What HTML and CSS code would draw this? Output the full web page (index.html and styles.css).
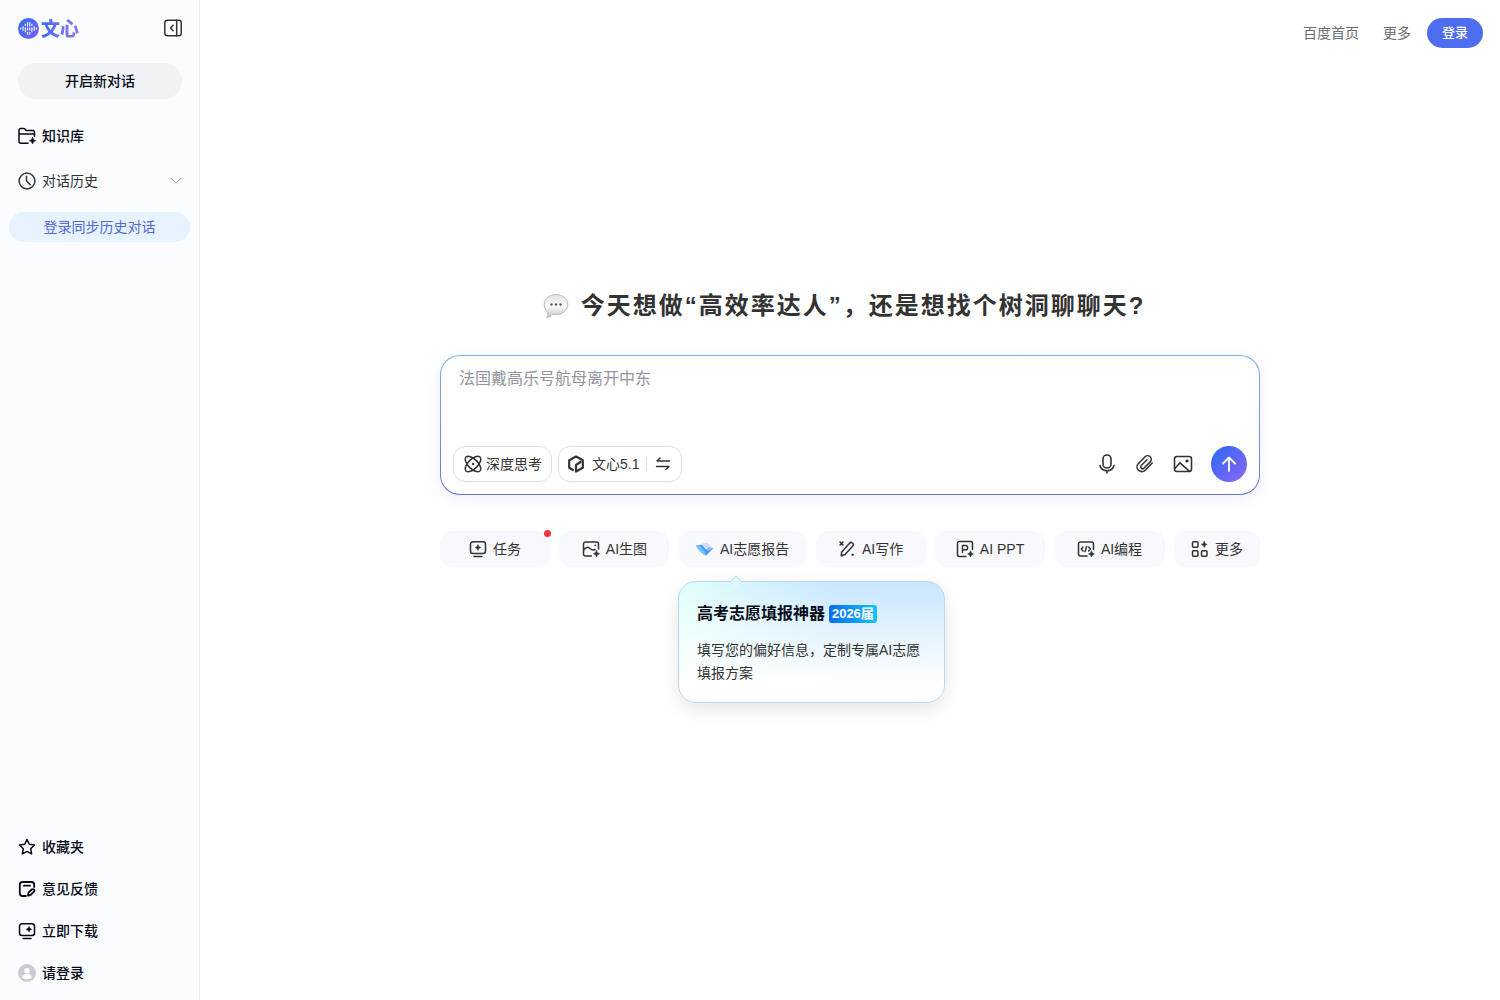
FILE: index.html
```
<!DOCTYPE html>
<html lang="zh-CN">
<head>
  <meta charset="UTF-8">
  <title>文心</title>
  <meta name="viewport" content="width=device-width, initial-scale=1">
  <link rel="stylesheet" href="styles.css">
</head>
<body>
  <aside class="sidebar">
    <div class="sidebar-top">
      <a href="#" class="logo">
        <svg width="21" height="21" viewBox="0 0 21 21">
          <defs>
            <linearGradient id="logoFill" x1="0" y1="0" x2="1" y2="1">
              <stop offset="0" stop-color="#2f6df2"/>
              <stop offset="1" stop-color="#8060f0"/>
            </linearGradient>
          </defs>
          <circle cx="10.500" cy="10.500" r="10.500" fill="url(#logoFill)"/>
          <path d="M2.700 10v1M5 8.700v3.600M7.300 6v1.500M7.300 9.700v4M9.500 4.500v3.500M9.500 10v2M9.500 14.200v2M11.700 4.500v3.500M11.700 10v2M11.700 14.200v2M13.900 6v1.500M13.900 9.700v4M16.200 8.700v3.600M18.400 10v1" stroke="#fff" stroke-width="1.100" stroke-linecap="round"/>
        </svg>
        <span>文心</span>
      </a>
      <button class="icon-btn" aria-label="收起侧边栏">
        <svg class="icon" viewBox="0 0 18 18"><rect x="0.800" y="1.300" width="16.400" height="15.400" rx="2.500"/><path d="M12.700 1.300v15.400M9 6.300 6.500 9 9 11.700"/></svg>
      </button>
    </div>

    <button class="new-chat">开启新对话</button>

    <nav class="menu">
      <a href="#" class="menu-item">
        <svg class="icon" viewBox="0 0 18 18"><path d="M10 16.300H3a2 2 0 0 1-2-2V3a1.500 1.500 0 0 1 1.500-1.500h3.300c.5 0 .8.200 1.100.500l1.300 1.600h7.300A1.800 1.800 0 0 1 16.500 5.400V9.500M1 7h15.500"/><path class="solid" d="M14.500 10.500q.6 2.700 3.200 3.200-2.600.6-3.200 3.300-.6-2.700-3.200-3.300 2.600-.5 3.200-3.200z"/></svg>
        知识库
      </a>
      <a href="#" class="menu-item regular">
        <svg class="icon" viewBox="0 0 18 18"><circle cx="9" cy="9" r="7.900"/><path d="M8.500 4.200V9l3.600 3.600"/></svg>
        对话历史
        <svg class="arrow" width="12" height="8" viewBox="0 0 12 8"><path d="M.8 1 6 6.300 11.200 1"/></svg>
      </a>
    </nav>
    <button class="sync-btn">登录同步历史对话</button>

    <nav class="menu bottom">
      <a href="#" class="menu-item">
        <svg class="icon" viewBox="0 0 18 18"><path d="m9 1.500 2.300 4.800 5.200.7-3.800 3.700.9 5.200L9 13.400l-4.600 2.500.9-5.200L1.500 7l5.200-.7z"/></svg>
        收藏夹
      </a>
      <a href="#" class="menu-item">
        <svg class="icon bold" viewBox="0 0 18 18"><path d="M8 16H4.500A2.700 2.700 0 0 1 1.800 13.300V4.700A2.700 2.700 0 0 1 4.500 2h9a2.700 2.700 0 0 1 2.700 2.700V7M6 5.700h6M10 15.500l.5-2.800 3.200-3.200a1.400 1.400 0 0 1 2.200 2.200l-3.200 3.200z"/></svg>
        意见反馈
      </a>
      <a href="#" class="menu-item">
        <svg class="icon" viewBox="0 0 18 18"><rect x="1.500" y="1.800" width="15" height="11.700" rx="2.500"/><path d="M5 16.500h8"/><path class="solid" d="M11 4.500q.4 2.300 2.700 2.800-2.300.5-2.700 2.800-.5-2.300-2.800-2.800 2.300-.5 2.800-2.800z"/></svg>
        立即下载
      </a>
      <a href="#" class="menu-item">
        <svg width="18" height="18" viewBox="0 0 18 18"><circle cx="9" cy="9" r="9" fill="#c9cad2"/><circle cx="9" cy="6.800" r="2.700" fill="#fff"/><path d="M4 13.800c.4-3 2.400-4 5-4s4.600 1 5 4c-2.600 1.800-7.400 1.800-10 0z" fill="#fff"/></svg>
        请登录
      </a>
    </nav>
  </aside>

  <main>
    <header class="topbar">
      <a href="#">百度首页</a>
      <a href="#">更多</a>
      <button class="login">登录</button>
    </header>

    <section class="content">
      <h1>
        <svg width="26" height="26" viewBox="0 0 26 26">
          <defs>
            <linearGradient id="bubble" x1="0" y1="0" x2="0" y2="1">
              <stop offset="0" stop-color="#e2e2e2"/>
              <stop offset="0.500" stop-color="#fafafa"/>
              <stop offset="1" stop-color="#c6c6c6"/>
            </linearGradient>
          </defs>
          <path d="M13 1.500c6.600 0 11.800 4.300 11.800 10S19.600 21.500 13 21.500c-1.200 0-2.200-.1-3.200-.4-1.600 1.900-3.800 3.300-6.200 3.400 1.100-1.300 1.600-3 1.300-5C2.600 17.600 1.200 14.800 1.200 11.500c0-5.700 5.200-10 11.800-10z" fill="url(#bubble)" stroke="#aaa" stroke-width="0.800"/>
          <circle cx="8.500" cy="11.500" r="1.200" fill="#555"/><circle cx="13" cy="11.500" r="1.200" fill="#555"/><circle cx="17.500" cy="11.500" r="1.200" fill="#555"/>
        </svg>
        <span>今天想做“高效率达人”，还是想找个树洞聊聊天?</span>
      </h1>

      <form class="chat-box">
        <textarea aria-label="输入问题" placeholder="法国戴高乐号航母离开中东"></textarea>
        <div class="chat-actions">
          <button type="button" class="pill">
            <svg class="icon" viewBox="0 0 18 18"><ellipse cx="9" cy="9" rx="9.800" ry="4.800" transform="rotate(45 9 9)"/><ellipse cx="9" cy="9" rx="9.800" ry="4.800" transform="rotate(-45 9 9)"/><circle class="solid" cx="9" cy="9" r="1"/></svg>
            深度思考
          </button>
          <button type="button" class="pill model">
            <svg class="icon thick" viewBox="0 0 18 18"><path d="M6 15 2.200 12.800V5.200L9 1.500l6.800 3.700v7.600L9 16.500V10l4.500-3"/></svg>
            文心5.1
            <span class="divider"></span>
            <svg class="icon" viewBox="0 0 18 18"><path d="M15.500 6H3l3-3M2.500 11.500H15l-3 3"/></svg>
          </button>
          <div class="chat-tools">
            <button type="button" class="icon-btn" aria-label="语音输入"><svg class="icon large" viewBox="0 0 20 20"><rect x="6" y="1" width="8" height="13" rx="4"/><path d="M3 11.500c.8 3.300 3.400 5.200 7 5.200s6.200-1.900 7-5.200M10 16.700V19"/></svg></button>
            <button type="button" class="icon-btn" aria-label="上传文件"><svg class="icon large" viewBox="0 0 20 20"><path d="m17.200 9-6.900 7.200a4.800 4.800 0 0 1-6.900-6.700l6.700-6.700a3.600 3.600 0 0 1 5.100 5.100l-6.300 6.300a1.900 1.900 0 0 1-2.700-2.700L12 5.800"/></svg></button>
            <button type="button" class="icon-btn" aria-label="上传图片"><svg class="icon large" viewBox="0 0 20 20"><rect x="1.500" y="2.500" width="17" height="15" rx="2.500"/><path d="m2 14.300 5-5.500 9.500 8.500"/><circle class="solid" cx="14" cy="7" r="1.300"/></svg></button>
            <button type="submit" class="send" aria-label="发送"><svg width="18" height="18" viewBox="0 0 18 18"><path d="M9 16V2.500M3 8.500l6-6 6 6"/></svg></button>
          </div>
        </div>
      </form>

      <div class="tools">
        <button class="tool">
          <svg class="icon" viewBox="0 0 18 18"><rect x="1.500" y="1.800" width="15" height="11.700" rx="2.500"/><path d="M5 16.500h8"/><path class="solid" d="M9 4.800q.4 2.300 2.700 2.800-2.300.5-2.700 2.800-.5-2.300-2.800-2.800 2.300-.5 2.800-2.800z"/></svg>
          任务
          <span class="dot"></span>
        </button>
        <button class="tool">
          <svg class="icon" viewBox="0 0 18 18"><path d="M9.500 16H3.500a2 2 0 0 1-2-2V4a2 2 0 0 1 2-2h11a2 2 0 0 1 2 2v5M2 9.700C4 7 6 6.700 8 8.500s3 2 5 1"/><circle class="solid" cx="13.200" cy="5.300" r=".6"/><path class="solid" d="M14.500 10.500q.6 2.700 3.200 3.200-2.600.6-3.200 3.300-.6-2.700-3.200-3.300 2.600-.5 3.200-3.200z"/></svg>
          AI生图
        </button>
        <div class="tool-wrap">
          <button class="tool">
            <svg width="18" height="18" viewBox="0 0 18 18"><path d="M4 4.500 10.500 2.500 15 6 9 9z" fill="#d2dcf7"/><path d="M0 5.500 6 5l4 4.500L17.500 8 10 15.500c-4-1.800-7-5-10-10z" fill="#3e9cf5"/><path d="m0 5.500 5 1 3.500 4.500L10 15.500c-4-1.800-7-5-10-10z" fill="#73c2fb"/><path d="m10 9.500 3-2.500 4.500 1-5 3z" fill="#8fb7f5"/></svg>
            AI志愿报告
          </button>
          <div class="popover">
            <h2>高考志愿填报神器 <span class="tag">2026届</span></h2>
            <p>填写您的偏好信息，定制专属AI志愿填报方案</p>
          </div>
        </div>
        <button class="tool">
          <svg class="icon" viewBox="0 0 18 18"><path d="M3.200 15.800 3.700 12 11.500 3.300a1.800 1.800 0 0 1 3.300 2.700L7 14.500zM2 2l3 3M5 2 2 5"/><path class="solid" d="M14 14h1.500v1.500h-1.500z"/></svg>
          AI写作
        </button>
        <button class="tool">
          <svg class="icon" viewBox="0 0 18 18"><path d="M10 16.500H3.500a2 2 0 0 1-2-2v-11a2 2 0 0 1 2-2h11a2 2 0 0 1 2 2V9.500M6.500 12.500v-7h3a2 2 0 0 1 0 4.300h-3"/><path class="solid" d="M14.500 11q.6 2.500 3 3-2.400.5-3 3-.6-2.500-3-3 2.400-.5 3-3z"/></svg>
          AI PPT
        </button>
        <button class="tool">
          <svg class="icon" viewBox="0 0 18 18"><path d="M10 16H3.500a2 2 0 0 1-2-2V4a2 2 0 0 1 2-2h11a2 2 0 0 1 2 2v5.500M6 7 4.300 9 6 11M9.700 6.500 8 11.500M11.700 7l1.700 2-1.700 2"/><path class="solid" d="M14.500 11q.6 2.500 3 3-2.400.5-3 3-.6-2.500-3-3 2.400-.5 3-3z"/></svg>
          AI编程
        </button>
        <button class="tool more">
          <svg class="icon" viewBox="0 0 18 18"><rect x="1.500" y="1.800" width="5.500" height="5.500" rx="1"/><rect x="1.500" y="10.700" width="5.500" height="5.500" rx="1"/><rect x="10.500" y="10.700" width="5.500" height="5.500" rx="1"/><path class="solid" d="M13.200 1.500q.6 2.500 3 3-2.400.5-3 3-.6-2.500-3-3 2.400-.5 3-3z"/></svg>
          更多
        </button>
      </div>
    </section>
  </main>
</body>
</html>
```
FILE: styles.css
```
* { box-sizing: border-box; }
body { font-family: "Liberation Sans", "Noto Sans CJK SC", sans-serif; font-size: 14px; line-height: 20px; margin: 0; min-height: 100vh; display: flex; background: #fff; color: #333; }
button { font: inherit; color: inherit; border: none; background: none; padding: 0; cursor: pointer; }
a { color: inherit; text-decoration: none; }
svg { flex: none; display: block; }

.icon { width: 18px; height: 18px; fill: none; stroke: currentColor; stroke-width: 1.5; stroke-linecap: round; stroke-linejoin: round; }
.icon.large { width: 20px; height: 20px; stroke-width: 1.6; }
.icon.bold { stroke-width: 1.8; }
.icon.thick { stroke-width: 2.2; }
.icon .solid { fill: currentColor; stroke-width: 0.5; }

/* sidebar */
.sidebar { width: 200px; flex: none; display: flex; flex-direction: column; background: #fafcff; border-right: 1px solid #eceef6; color: #050a18; }
.sidebar-top { display: flex; align-items: center; justify-content: space-between; height: 24px; margin: 16px 17px 0 18px; }
.logo { display: flex; align-items: center; gap: 2px; font-size: 19px; line-height: 24px; font-weight: 900; }
.logo span { padding-top: 3px; background: linear-gradient(90deg, #3c68f3, #9478ee); -webkit-background-clip: text; background-clip: text; color: transparent; }
.icon-btn { display: block; color: #333; }
.new-chat { height: 36px; margin: 23px 17px 0 18px; border-radius: 18px; background: #f1f2f6; font-weight: 500; }
.menu { display: flex; flex-direction: column; gap: 25px; margin: 27px 17px 0 18px; }
.menu-item { display: flex; align-items: center; gap: 6px; height: 20px; font-weight: 500; }
.menu-item.regular { color: #333; font-weight: 400; }
.arrow { margin-left: auto; fill: none; stroke: #888; }
.sync-btn { height: 30px; margin: 21px 9px 0; border-radius: 15px; background: #e6f3ff; color: #5267d8; }
.menu.bottom { margin-top: auto; margin-bottom: 17px; gap: 22px; }

/* main area */
main { flex: 1; min-width: 0; }
.topbar { display: flex; align-items: center; justify-content: flex-end; gap: 24px; padding: 18px 17px 0; color: #6a6c75; }
.login { width: 56px; height: 30px; margin-left: -8px; border-radius: 15px; background: #4e6ef2; color: #fff; font-size: 13px; font-weight: 500; }
.content { max-width: 860px; margin: 0 auto; padding: 240px 20px 24px; }
h1 { display: flex; align-items: center; justify-content: center; gap: 12px; margin: 0 0 31px; padding-right: 12px; font-size: 24px; line-height: 36px; font-weight: 700; letter-spacing: 2px; color: #333; }

.chat-box { display: flex; flex-direction: column; height: 140px; padding: 12px; border: 1px solid transparent; border-radius: 20px; background: linear-gradient(#fff, #fff) padding-box, linear-gradient(#7fb0e6, #6f74d6) border-box; box-shadow: 0 4px 14px #4e6ef21a; }
textarea { flex: 1; border: none; outline: none; resize: none; padding: 0 6px; background: none; font: inherit; font-size: 16px; line-height: 22px; }
textarea::placeholder { color: #9295a0; }
.chat-actions { display: flex; align-items: center; gap: 6px; }
.pill { display: flex; align-items: center; gap: 4px; height: 36px; padding: 0 9px 0 10px; border: 1px solid #dddfe5; border-radius: 12px; }
.pill.model { gap: 7px; padding: 0 9px 0 8px; }
.divider { width: 1px; height: 14px; background: #dddfe5; }
.chat-tools { display: flex; align-items: center; gap: 18px; margin-left: auto; }
.send { display: flex; align-items: center; justify-content: center; width: 36px; height: 36px; border-radius: 50%; background: linear-gradient(135deg, #2868f5, #8e66f5); }
.send svg { fill: none; stroke: #fff; stroke-width: 1.8; stroke-linecap: round; stroke-linejoin: round; }

/* shortcuts */
.tools { display: flex; justify-content: space-between; margin-top: 36px; }
.tool { position: relative; display: flex; align-items: center; justify-content: center; gap: 6px; min-width: 110px; height: 36px; padding: 0 17px; border-radius: 12px; background: #f8f9fe; }
.tool.more { min-width: 0; }
.dot { position: absolute; top: -1px; right: -1px; width: 7px; height: 7px; border-radius: 50%; background: #f5333f; }
.tool-wrap { position: relative; }
.popover { position: absolute; top: 50px; left: -1px; width: 267px; padding: 20px 18px 17px; border: 1px solid #b8d6f0; border-radius: 18px; background: linear-gradient(to bottom, #fff0, #fff 85%), linear-gradient(90deg, #e0fffa, #c8e6ff 60%); box-shadow: 0 6px 18px #0000001a; }
.popover::before { content: ""; position: absolute; top: -5px; left: 52px; width: 9px; height: 9px; border: 1px solid #b8d6f0; border-right: none; border-bottom: none; border-radius: 2px; background: #dcf8fc; transform: rotate(45deg); }
.popover h2 { display: flex; align-items: center; gap: 4px; margin: 0 0 13px; font-size: 16px; line-height: 24px; font-weight: 700; color: #050a18; }
.tag { padding: 0 3px; border-radius: 3px; background: linear-gradient(90deg, #0a6cf0, #14c4fa); color: #fff; font-size: 13px; line-height: 18px; font-weight: 600; }
.popover p { margin: 0; line-height: 23px; }
```
